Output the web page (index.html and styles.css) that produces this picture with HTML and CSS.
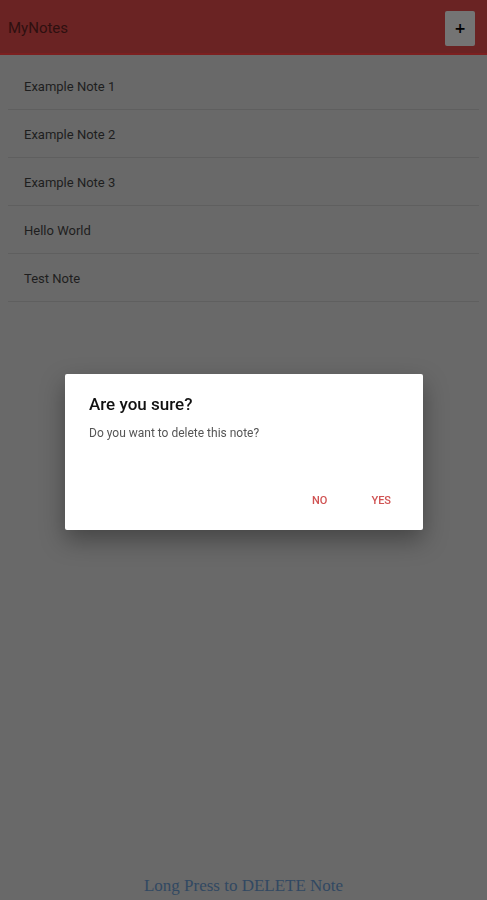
FILE: index.html
```html
<!DOCTYPE html>
<html lang="en">
<head>
    <meta charset="UTF-8">
    <meta name="viewport" content="width=device-width, initial-scale=1.0">
    <title>MyNotes</title>
    <link rel="stylesheet" href="styles.css">
</head>
<body>
    <header class="app-bar">
        <span class="app-title">MyNotes</span>
        <button class="add-btn">+</button>
    </header>

    <ul class="note-list">
        <li class="note-item">Example Note 1</li>
        <li class="note-item">Example Note 2</li>
        <li class="note-item">Example Note 3</li>
        <li class="note-item">Hello World</li>
        <li class="note-item">Test Note</li>
    </ul>

    <footer class="hint">Long Press to DELETE Note</footer>

    <div class="backdrop">
        <div class="dialog">
            <h2 class="dialog-title">Are you sure?</h2>
            <p class="dialog-text">Do you want to delete this note?</p>
            <div class="dialog-actions">
                <button class="dialog-btn">NO</button>
                <button class="dialog-btn">YES</button>
            </div>
        </div>
    </div>
</body>
</html>
```

FILE: styles.css
```css
:root {
    --bar: #6a2323;
    --bar-line: #7c2020;
    --page: #696969;
    --divider: #5f5f5f;
    --accent: #d05252;
}

* {
    margin: 0;
    padding: 0;
    box-sizing: border-box;
}

body {
    background: var(--page);
    font-family: Roboto, 'Noto Sans', sans-serif;
    min-height: 100vh;
    display: flex;
    flex-direction: column;
}

.app-bar {
    height: 55px;
    background: var(--bar);
    border-bottom: 2px solid var(--bar-line);
    display: flex;
    align-items: center;
    justify-content: space-between;
    padding: 0 12px 0 8px;
}

.app-title {
    font-size: 15px;
    color: #2e1010;
    padding-top: 3px;
}

.add-btn {
    width: 30px;
    height: 35px;
    margin-top: 3px;
    border: none;
    border-radius: 2px;
    background: #747474;
    color: #000;
    font-size: 14px;
    font-weight: bold;
    font-family: 'DejaVu Sans', sans-serif;
    line-height: 35px;
}

.note-list {
    list-style: none;
    margin-top: 7px;
    padding: 0 8px;
}

.note-item {
    height: 48px;
    display: flex;
    align-items: center;
    padding-left: 16px;
    padding-top: 2px;
    font-size: 13px;
    color: #1e1e1e;
    border-bottom: 1px solid var(--divider);
}

.hint {
    margin-top: auto;
    text-align: center;
    font-family: 'Liberation Serif', serif;
    font-size: 17px;
    color: #314862;
    padding-bottom: 4px;
}

.backdrop {
    position: fixed;
    inset: 0;
    display: flex;
    align-items: center;
    justify-content: center;
    padding-left: 1px;
}

.dialog {
    width: 358px;
    height: 156px;
    background: #fff;
    border-radius: 2px;
    box-shadow: 0 10px 24px rgba(0, 0, 0, 0.35);
    padding: 20px 0 0 24px;
    display: flex;
    flex-direction: column;
    margin-top: 4px;
}

.dialog-title {
    font-size: 17px;
    font-weight: 500;
    color: #111;
    line-height: 20px;
}

.dialog-text {
    margin-top: 12px;
    font-size: 12px;
    color: #555;
}

.dialog-actions {
    margin-top: auto;
    margin-bottom: 19px;
    display: flex;
    justify-content: flex-end;
    gap: 12px;
    padding-right: 16px;
}

.dialog-btn {
    border: none;
    background: none;
    padding: 4px 16px;
    font-family: Roboto, sans-serif;
    font-size: 11px;
    font-weight: 500;
    color: var(--accent);
}
```
